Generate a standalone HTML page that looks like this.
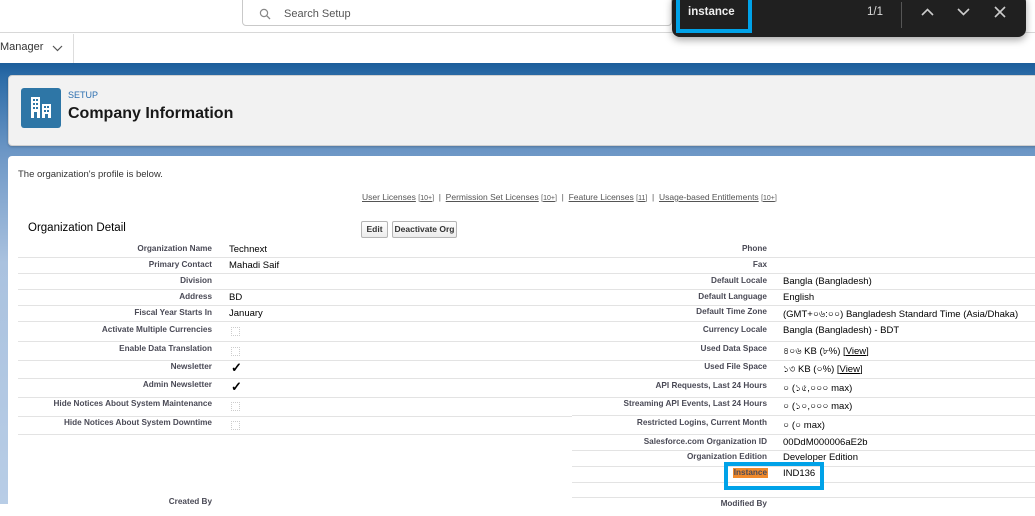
<!DOCTYPE html>
<html><head><meta charset="utf-8"><style>
*{margin:0;padding:0;box-sizing:border-box}
body{width:1035px;height:504px;overflow:hidden;position:relative;background:#fff;font-family:"Liberation Sans",Arial,sans-serif}
.a{position:absolute;white-space:nowrap}
.l{position:absolute;font-size:8.2px;font-weight:bold;color:#4a4a56;text-align:right;white-space:nowrap}
.v{position:absolute;font-size:9.5px;color:#000;white-space:nowrap}
.h{position:absolute;height:1px;background:#e3e3e3}
.cb{position:absolute;width:9px;height:9px;border:1px dotted #ccc}
.ck{position:absolute;font-size:13px;color:#000;font-weight:bold}
</style></head><body>
<div class="a" style="left:0;top:0;width:1035px;height:33px;border-bottom:1px solid #d8d8d8;background:#fff"></div>
<div class="a" style="left:242px;top:-4px;width:430px;height:30px;border:1px solid #c9c9c9;border-radius:4px;background:#fff"></div>
<svg class="a" style="left:259px;top:8px" width="12" height="12" viewBox="0 0 12 12"><circle cx="5" cy="5" r="3.6" fill="none" stroke="#888" stroke-width="1.2"/><path d="M7.7 7.7L11 11" stroke="#888" stroke-width="1.3"/></svg>
<div class="a" style="left:284px;top:8px;font-size:11px;color:#555">Search Setup</div>
<div class="a" style="left:0;top:34px;width:1035px;height:29px;background:#fff"></div>
<div class="a" style="left:0;top:41px;font-size:11px;color:#333">Manager</div>
<svg class="a" style="left:52px;top:45px" width="11" height="7" viewBox="0 0 11 7"><path d="M1 1l4.5 4.5L10 1" fill="none" stroke="#555" stroke-width="1.2"/></svg>
<div class="a" style="left:73px;top:34px;width:1px;height:29px;background:#ddd"></div>
<div class="a" style="left:0;top:63px;width:1035px;height:441px;background:linear-gradient(#1c5d9a 0px,#2a6aa6 12px,#6d97c6 90px,#aac2df 200px,#b8cde6 441px)"></div>
<div class="a" style="left:8px;top:75px;width:1035px;height:71px;background:#f2f2f2;border:1px solid #d0d0d0;border-radius:4px;box-shadow:0 1px 2px rgba(0,0,0,.2)"></div>
<div class="a" style="left:21px;top:88px;width:40px;height:40px;background:#2e76a6;border-radius:3px"></div>
<svg class="a" style="left:29px;top:97px" width="24" height="22" viewBox="0 0 24 22"><rect x="2" y="0" width="9" height="21" fill="#fff"/><rect x="13" y="7" width="9" height="14" fill="#fff"/><g fill="#2e76a6"><rect x="4" y="2" width="2" height="2"/><rect x="7" y="2" width="2" height="2"/><rect x="4" y="6" width="2" height="2"/><rect x="7" y="6" width="2" height="2"/><rect x="4" y="10" width="2" height="2"/><rect x="7" y="10" width="2" height="2"/><rect x="5" y="15" width="3" height="6"/><rect x="15" y="9" width="2" height="2"/><rect x="18" y="9" width="2" height="2"/><rect x="15" y="13" width="2" height="2"/><rect x="18" y="13" width="2" height="2"/><rect x="16" y="17" width="3" height="4"/></g></svg>
<div class="a" style="left:68px;top:90px;font-size:9px;color:#2c6fb0">SETUP</div>
<div class="a" style="left:68px;top:105px;font-size:16px;font-weight:bold;color:#181818">Company Information</div>
<div class="a" style="left:8px;top:156px;width:1035px;height:360px;background:#fff;border-radius:4px 0 0 0"></div>
<div class="a" style="left:18px;top:169px;font-size:9.5px;color:#333">The organization's profile is below.</div>
<div class="a" style="left:362px;top:192px;font-size:8.5px;color:#555"><u>User Licenses</u> <span style="font-size:7px">[<u>10+</u>]</span> &nbsp;|&nbsp; <u>Permission Set Licenses</u> <span style="font-size:7px">[<u>10+</u>]</span> &nbsp;|&nbsp; <u>Feature Licenses</u> <span style="font-size:7px">[<u>11</u>]</span> &nbsp;|&nbsp; <u>Usage-based Entitlements</u> <span style="font-size:7px">[<u>10+</u>]</span></div>
<div class="a" style="left:28px;top:222px;font-size:11.5px;color:#000">Organization Detail</div>
<div class="a" style="left:361px;top:221px;width:27px;height:17px;border:1px solid #b5b5b5;border-radius:2px;background:linear-gradient(#fff,#ececec);font-size:8.5px;font-weight:bold;color:#333;text-align:center;line-height:15px">Edit</div>
<div class="a" style="left:392px;top:221px;width:65px;height:17px;border:1px solid #b5b5b5;border-radius:2px;background:linear-gradient(#fff,#ececec);font-size:8.5px;font-weight:bold;color:#333;text-align:center;line-height:15px">Deactivate Org</div>

<div class="l" style="right:823px;top:244px">Organization Name</div><div class="v" style="left:229px;top:244px">Technext</div><div class="h" style="left:18px;top:257px;width:554px"></div>
<div class="l" style="right:823px;top:260px">Primary Contact</div><div class="v" style="left:229px;top:260px">Mahadi Saif</div><div class="h" style="left:18px;top:273px;width:554px"></div>
<div class="l" style="right:823px;top:276px">Division</div><div class="h" style="left:18px;top:289px;width:554px"></div>
<div class="l" style="right:823px;top:292px">Address</div><div class="v" style="left:229px;top:292px">BD</div><div class="h" style="left:18px;top:305px;width:554px"></div>
<div class="l" style="right:823px;top:308px">Fiscal Year Starts In</div><div class="v" style="left:229px;top:308px">January</div><div class="h" style="left:18px;top:321px;width:554px"></div>
<div class="l" style="right:823px;top:325px">Activate Multiple Currencies</div><div class="cb" style="left:231px;top:327px"></div><div class="h" style="left:18px;top:341px;width:554px"></div>
<div class="l" style="right:823px;top:344px">Enable Data Translation</div><div class="cb" style="left:231px;top:347px"></div><div class="h" style="left:18px;top:360px;width:554px"></div>
<div class="l" style="right:823px;top:362px">Newsletter</div><div class="ck" style="left:231px;top:360px">✓</div><div class="h" style="left:18px;top:378px;width:554px"></div>
<div class="l" style="right:823px;top:380px">Admin Newsletter</div><div class="ck" style="left:231px;top:379px">✓</div><div class="h" style="left:18px;top:397px;width:554px"></div>
<div class="l" style="right:823px;top:399px">Hide Notices About System Maintenance</div><div class="cb" style="left:231px;top:402px"></div><div class="h" style="left:18px;top:416px;width:554px"></div>
<div class="l" style="right:823px;top:418px">Hide Notices About System Downtime</div><div class="cb" style="left:231px;top:421px"></div><div class="h" style="left:18px;top:434px;width:554px"></div>
<div class="l" style="right:823px;top:497px">Created By</div>

<div class="l" style="right:268px;top:244px">Phone</div><div class="h" style="left:572px;top:257px;width:463px"></div>
<div class="l" style="right:268px;top:260px">Fax</div><div class="h" style="left:572px;top:273px;width:463px"></div>
<div class="l" style="right:268px;top:276px">Default Locale</div><div class="v" style="left:783px;top:276px">Bangla (Bangladesh)</div><div class="h" style="left:572px;top:289px;width:463px"></div>
<div class="l" style="right:268px;top:292px">Default Language</div><div class="v" style="left:783px;top:292px">English</div><div class="h" style="left:572px;top:305px;width:463px"></div>
<div class="l" style="right:268px;top:307px">Default Time Zone</div><div class="v" style="left:783px;top:308px">(GMT+০৬:০০) Bangladesh Standard Time (Asia/Dhaka)</div><div class="h" style="left:572px;top:321px;width:463px"></div>
<div class="l" style="right:268px;top:325px">Currency Locale</div><div class="v" style="left:783px;top:325px">Bangla (Bangladesh) - BDT</div><div class="h" style="left:572px;top:341px;width:463px"></div>
<div class="l" style="right:268px;top:344px">Used Data Space</div><div class="v" style="left:783px;top:345px">৪০৬ KB (৮%) [<u>View</u>]</div><div class="h" style="left:572px;top:360px;width:463px"></div>
<div class="l" style="right:268px;top:362px">Used File Space</div><div class="v" style="left:783px;top:363px">১৩ KB (০%) [<u>View</u>]</div><div class="h" style="left:572px;top:378px;width:463px"></div>
<div class="l" style="right:268px;top:381px">API Requests, Last 24 Hours</div><div class="v" style="left:783px;top:382px">০ (১৫,০০০ max)</div><div class="h" style="left:572px;top:397px;width:463px"></div>
<div class="l" style="right:268px;top:399px">Streaming API Events, Last 24 Hours</div><div class="v" style="left:783px;top:400px">০ (১০,০০০ max)</div><div class="h" style="left:572px;top:415px;width:463px"></div>
<div class="l" style="right:268px;top:418px">Restricted Logins, Current Month</div><div class="v" style="left:783px;top:419px">০ (০ max)</div><div class="h" style="left:572px;top:434px;width:463px"></div>
<div class="l" style="right:268px;top:437px">Salesforce.com Organization ID</div><div class="v" style="left:783px;top:437px">00DdM000006aE2b</div><div class="h" style="left:572px;top:450px;width:463px"></div>
<div class="l" style="right:268px;top:452px">Organization Edition</div><div class="v" style="left:783px;top:452px">Developer Edition</div><div class="h" style="left:572px;top:466px;width:463px"></div>
<div class="a" style="left:733px;top:468px;width:35px;height:10px;background:#f08a2c"></div>
<div class="l" style="right:268px;top:468px">Instance</div><div class="v" style="left:783px;top:468px">IND136</div><div class="h" style="left:572px;top:482px;width:463px"></div>
<div class="h" style="left:572px;top:497px;width:463px"></div>
<div class="l" style="right:268px;top:499px">Modified By</div>
<div class="a" style="left:724px;top:462px;width:100px;height:28px;border:4px solid #00a2e8"></div>

<div class="a" style="left:672px;top:-6px;width:354px;height:43px;background:#202020;border-radius:8px;box-shadow:0 3px 8px rgba(0,0,0,.35)"></div>
<div class="a" style="left:676px;top:-4px;width:76px;height:37px;border:4px solid #00a2e8"></div>
<div class="a" style="left:688px;top:6px;font-size:11.5px;font-weight:bold;color:#eee">instance</div>
<div class="a" style="left:867px;top:6px;font-size:11.5px;color:#ddd">1/1</div>
<div class="a" style="left:901px;top:2px;width:1px;height:26px;background:#555"></div>
<svg class="a" style="left:921px;top:8px" width="13" height="8" viewBox="0 0 13 8"><path d="M1 7l5.5-5.5L12 7" fill="none" stroke="#ccc" stroke-width="1.6"/></svg>
<svg class="a" style="left:957px;top:8px" width="13" height="8" viewBox="0 0 13 8"><path d="M1 1l5.5 5.5L12 1" fill="none" stroke="#ccc" stroke-width="1.6"/></svg>
<svg class="a" style="left:994px;top:6px" width="12" height="12" viewBox="0 0 12 12"><path d="M1 1l10 10M11 1L1 11" stroke="#ccc" stroke-width="1.6"/></svg>
</body></html>
